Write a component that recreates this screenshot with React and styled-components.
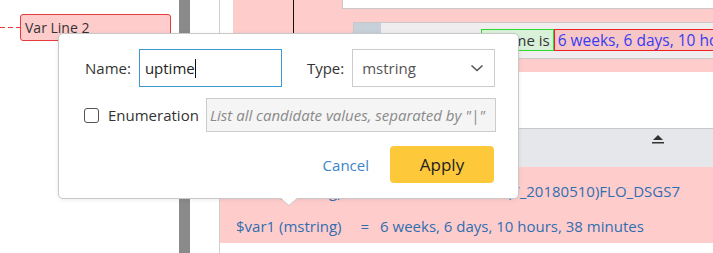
import React from 'react';
import styled, { createGlobalStyle } from 'styled-components';

const GlobalStyle = createGlobalStyle`
  html, body {
    margin: 0;
    padding: 0;
    background: #fff;
  }
  body {
    font-family: "Open Sans", "DejaVu Sans", sans-serif;
    color: #333;
    overflow: hidden;
  }
  * {
    box-sizing: border-box;
  }
`;

const Screen = styled.div`
  position: relative;
  display: flex;
  width: 713px;
  height: 253px;
  overflow: hidden;
  background: #fff;
`;

/* flow canvas on the left */
const Canvas = styled.div`
  width: 179px;
  flex: none;
  display: flex;
  align-items: flex-start;
  padding-top: 14px;
`;

const Connector = styled.div`
  width: 20px;
  height: 1px;
  margin-top: 13px;
  background: repeating-linear-gradient(to right, #e8393d 0 5px, transparent 5px 8px);
`;

const Node = styled.div`
  width: 151px;
  height: 27px;
  padding-left: 4px;
  display: flex;
  align-items: center;
  background: #ffcccc;
  border: 1px solid #e8393d;
  border-radius: 3px;
  font-size: 14px;
  color: #333;
`;

const Splitter = styled.div`
  width: 11px;
  flex: none;
  background: #8a8a8a;
`;

const Rail = styled.div`
  width: ${p => p.$w}px;
  flex: none;
  border-right: ${p => (p.$line ? '1px solid #cfcfcf' : 'none')};
`;

const Main = styled.div`
  flex: 1;
  display: flex;
  flex-direction: column;
  min-width: 0;
`;

const TopBand = styled.div`
  height: 72px;
  margin-left: 13px;
  background: #ffcccc;
  display: flex;
`;

const TopLeft = styled.div`
  width: 109px;
  flex: none;
  padding-left: 60px;
`;

const Caret = styled.div`
  width: 1px;
  height: ${p => p.$h}px;
  background: #111;
`;

const TopRight = styled.div`
  flex: 1;
  display: flex;
  flex-direction: column;
`;

const WhiteTab = styled.div`
  height: 9px;
  background: #fff;
  border-left: 1px solid #c8c8c8;
  border-bottom: 1px solid #c8c8c8;
`;

const StepBox = styled.div`
  margin: 13px 0 0 11px;
  height: 37px;
  background: #efeded;
  border: 1px solid #c8c8c8;
  border-right: none;
  position: relative;
  display: flex;
  align-items: flex-start;
  padding: 6px 0 0 127px;
  white-space: nowrap;
  overflow: hidden;
`;

const StepTab = styled.div`
  position: absolute;
  left: 0;
  top: 0;
  width: 27px;
  height: 10px;
  background: #c5d0d8;
`;

const Chip = styled.span`
  height: 22px;
  padding: 0 3px;
  display: flex;
  align-items: center;
  font-size: ${p => (p.$value ? 15.5 : 15)}px;
  border: 1px solid ${p => (p.$value ? '#f02020' : '#2fd82f')};
  background: ${p => (p.$value ? '#f7c6c6' : '#d8f1d8')};
  color: ${p => (p.$value ? '#3b3bf0' : '#333')};
`;

const Gap = styled.div`
  height: ${p => p.$h}px;
  flex: none;
`;

const HeaderBand = styled.div`
  height: 39px;
  background: #e6e7ea;
  border-top: 1px solid #c8c8c8;
  display: flex;
  justify-content: flex-end;
  padding: 5px 47px 0 0;
`;

const ResultBand = styled.div`
  height: 76px;
  background: #ffcccc;
  display: flex;
  flex-direction: column;
  padding: 6px 0 0 16px;
  font-size: 15px;
  color: #2f6fb0;
  white-space: nowrap;
`;

const ResultLine = styled.div`
  height: 43px;
  display: flex;
  align-items: center;
`;

const Equals = styled.span`
  margin: 0 11px 0 19px;
`;

/* popover dialog */
const Dialog = styled.div`
  position: absolute;
  left: 58px;
  top: 33px;
  width: 461px;
  height: 166px;
  background: #fff;
  border: 1px solid #c8c8c8;
  border-radius: 5px;
  box-shadow: 0 1px 4px rgba(0, 0, 0, 0.08);
  padding: 15px 24px 0 25px;
  display: flex;
  flex-direction: column;
  gap: 10px;

  &::after,
  &::before {
    content: '';
    position: absolute;
    left: 50%;
    transform: translateX(-50%);
    border-style: solid;
    border-color: transparent;
  }
  &::before {
    bottom: -8px;
    border-width: 8px 9px 0 9px;
    border-top-color: #c8c8c8;
  }
  &::after {
    bottom: -7px;
    border-width: 7px 8px 0 8px;
    border-top-color: #fff;
  }
`;

const Row = styled.div`
  display: flex;
  align-items: center;
  justify-content: ${p => (p.$end ? 'flex-end' : 'flex-start')};
  gap: ${p => p.$gap || 8}px;
  margin-top: ${p => p.$mt || 0}px;
`;

const Label = styled.label`
  font-size: 15px;
  color: #333;
  margin-left: ${p => p.$ml || 0}px;
  display: flex;
  align-items: center;
`;

const Field = styled.div`
  width: ${p => p.$w}px;
  height: ${p => p.$h || 38}px;
  border: 1px solid ${p => (p.$focus ? '#3f97d3' : '#cccccc')};
  background: ${p => (p.$muted ? '#f5f5f5' : '#fff')};
  display: flex;
  align-items: center;
  padding: 0 ${p => p.$pr || 5}px 0 ${p => p.$pl || 5}px;
  font-size: 15px;
  color: ${p => (p.$focus ? '#222' : '#555')};
  flex: none;
`;

const Placeholder = styled.span`
  font-style: italic;
  color: #8a8a8a;
  white-space: nowrap;
`;

const TextCaret = styled.span`
  display: inline-block;
  width: 1px;
  height: 19px;
  background: #111;
`;

const Spacer = styled.span`
  flex: 1;
`;

const Check = styled.span`
  width: 15px;
  height: 15px;
  border: 1.5px solid #555;
  border-radius: 3px;
  margin-right: 9px;
  background: #fff;
  flex: none;
`;

const LinkButton = styled.button`
  border: none;
  background: none;
  padding: 0;
  font-family: inherit;
  font-size: 15px;
  color: #3a86c8;
`;

const ApplyButton = styled.button`
  width: 104px;
  height: 37px;
  border: none;
  border-radius: 4px;
  background: #fdc93b;
  font-family: inherit;
  font-size: 17px;
  color: #222;
`;

const Chevron = () => (
  <svg width="14" height="8" viewBox="0 0 14 8">
    <polyline points="1.5,1.5 7,6.5 12.5,1.5" fill="none" stroke="#555" strokeWidth="1.6" />
  </svg>
);

const Eject = () => (
  <svg width="16" height="10" viewBox="0 0 16 10">
    <polygon points="8,1 13,6 3,6" fill="#333" />
    <rect x="2" y="8" width="12" height="1.5" fill="#333" />
  </svg>
);

const results = [
  { name: '$var0 (mstring)', value: 'XRXRV9K_ROUTER(Y_20180510)FLO_DSGS7' },
  { name: '$var1 (mstring)', value: '6 weeks, 6 days, 10 hours, 38 minutes' },
];

export default function App() {
  return (
    <>
      <GlobalStyle />
      <Screen>
        <Canvas>
          <Connector />
          <Node>Var Line 2</Node>
        </Canvas>
        <Splitter />
        <Rail $w={5} />
        <Rail $w={25} $line />
        <Main>
          <TopBand>
            <TopLeft>
              <Caret $h={34} />
            </TopLeft>
            <TopRight>
              <WhiteTab />
              <StepBox>
                <StepTab />
                <Chip>uptime is</Chip>
                <Chip $value>6 weeks, 6 days, 10 hours, 38 minutes</Chip>
              </StepBox>
            </TopRight>
          </TopBand>
          <Gap $h={56} />
          <HeaderBand>
            <Eject />
          </HeaderBand>
          <ResultBand>
            {results.map(r => (
              <ResultLine key={r.name}>
                <span>{r.name}</span>
                <Equals>=</Equals>
                <span>{r.value}</span>
              </ResultLine>
            ))}
          </ResultBand>
        </Main>

        <Dialog>
          <Row>
            <Label $ml={1}>Name:</Label>
            <Field $w={143} $focus>
              uptime<TextCaret />
            </Field>
            <Label $ml={17}>Type:</Label>
            <Field $w={143} $pl={9} $pr={10}>
              mstring
              <Spacer />
              <Chevron />
            </Field>
          </Row>
          <Row $gap={7} $mt={1}>
            <Label>
              <Check />
              Enumeration
            </Label>
            <Field $w={290} $h={34} $muted $pl={3}>
              <Placeholder>List all candidate values, separated by "|"</Placeholder>
            </Field>
          </Row>
          <Row $end $gap={21} $mt={4}>
            <LinkButton>Cancel</LinkButton>
            <ApplyButton>Apply</ApplyButton>
          </Row>
        </Dialog>
      </Screen>
    </>
  );
}
